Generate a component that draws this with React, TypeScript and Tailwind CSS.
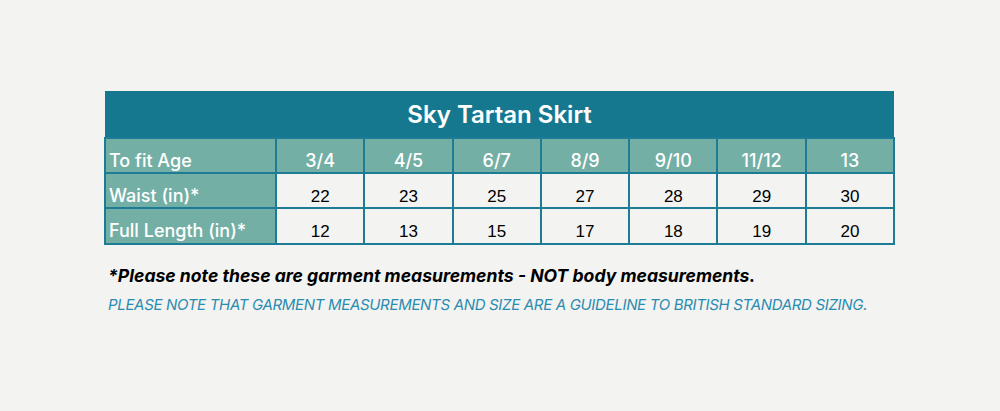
import React from "react";

const ages = ["3/4", "4/5", "6/7", "8/9", "9/10", "11/12", "13"];
const waist = ["22", "23", "25", "27", "28", "29", "30"];
const length = ["12", "13", "15", "17", "18", "19", "20"];

const sans = { fontFamily: "Inter, 'Open Sans', sans-serif" };
const arial = { fontFamily: "'Liberation Sans', Arial, sans-serif" };

export default function App() {
  const border = "border-[2px] border-[#1d7b95]";
  const head = `${border} bg-[#74afa5] text-white text-[18px] font-medium align-bottom leading-none`;
  const cell = `${border} bg-[#f3f3f2] text-black text-[17px] text-center align-bottom leading-none`;
  return (
    <div className="w-[1000px] h-[411px] bg-[#f3f3f2] pt-[91px] pl-[104px]">
      <table className="border-collapse w-[789px] table-fixed">
        <colgroup>
          <col className="w-[171px]" />
          {ages.map((a) => (
            <col key={a} className="w-[88.3px]" />
          ))}
        </colgroup>
        <tbody>
          <tr className="h-[47px]">
            <td
              colSpan={8}
              className="bg-[#16788f] text-white text-center text-[24px] font-semibold pt-[1px]"
              style={sans}
            >
              Sky Tartan Skirt
            </td>
          </tr>
          <tr className="h-[35px]">
            <td className={`${head} pl-[3px] pb-[2px]`} style={sans}>
              To fit Age
            </td>
            {ages.map((a) => (
              <td key={a} className={`${head} text-center pb-[2px]`} style={sans}>
                {a}
              </td>
            ))}
          </tr>
          <tr className="h-[35px]">
            <td className={`${head} pl-[3px] pb-[2px]`} style={sans}>
              Waist (in)*
            </td>
            {waist.map((v, i) => (
              <td key={i} className={`${cell} pb-[2px]`} style={arial}>
                {v}
              </td>
            ))}
          </tr>
          <tr className="h-[36px]">
            <td className={`${head} pl-[3px] pb-[3px]`} style={sans}>
              Full Length (in)*
            </td>
            {length.map((v, i) => (
              <td key={i} className={`${cell} pb-[3px]`} style={arial}>
                {v}
              </td>
            ))}
          </tr>
        </tbody>
      </table>
      <div className="pl-[4px] pt-[21px]">
        <p className="text-[17.6px] font-bold italic text-black leading-[20px]" style={sans}>
          *Please note these are garment measurements - NOT body measurements.
        </p>
        <p
          className="text-[15px] italic text-[#2a8cb0] leading-[17px] mt-[10px] tracking-[-0.32px] whitespace-nowrap"
          style={sans}
        >
          PLEASE NOTE THAT GARMENT MEASUREMENTS AND SIZE ARE A GUIDELINE TO BRITISH STANDARD SIZING.
        </p>
      </div>
    </div>
  );
}
